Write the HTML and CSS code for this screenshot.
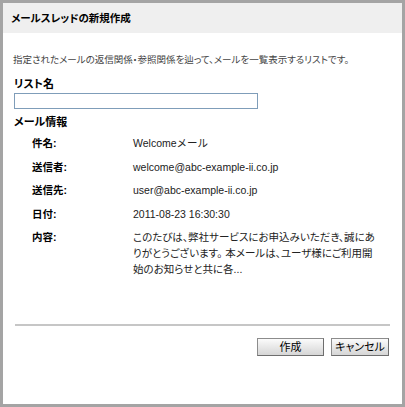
FILE: index.html
```html
<!DOCTYPE html>
<html lang="ja">
<head>
<meta charset="utf-8">
<title>メールスレッドの新規作成</title>
<link rel="stylesheet" href="styles.css">
</head>
<body>
<div class="dialog">
  <div class="header">メールスレッドの新規作成</div>
  <div class="content">
    <p class="desc">指定されたメールの返信関係・参照関係を辿って、メールを一覧表示するリストです。</p>
    <div class="field-label">リスト名</div>
    <input class="text-input" type="text">
    <div class="section-label">メール情報</div>
    <div class="info">
      <div class="k">件名:</div><div class="v">Welcomeメール</div>
      <div class="k">送信者:</div><div class="v">welcome@abc-example-ii.co.jp</div>
      <div class="k">送信先:</div><div class="v">user@abc-example-ii.co.jp</div>
      <div class="k">日付:</div><div class="v">2011-08-23 16:30:30</div>
      <div class="k">内容:</div><div class="v body-text">このたびは、弊社サービスにお申込みいただき、誠にありがとうございます。&nbsp;本メールは、ユーザ様にご利用開始のお知らせと共に各...</div>
    </div>
    <div class="footer">
      <hr class="rule">
      <div class="buttons">
        <button class="btn btn-create" type="button">作成</button>
        <button class="btn btn-cancel" type="button">キャンセル</button>
      </div>
    </div>
  </div>
</div>
</body>
</html>
```
FILE: styles.css
```css
html, body {
  margin: 0;
  padding: 0;
  background: #ffffff;
}
body {
  font-family: "Liberation Sans", "Noto Sans CJK JP", sans-serif;
  color: #000;
}
.dialog {
  width: 405px;
  height: 407px;
  box-sizing: border-box;
  border: 3px solid #a4a4a4;
  display: flex;
  flex-direction: column;
  background: #fff;
}
.header {
  height: 30px;
  flex: none;
  background: #efefef;
  padding-left: 8px;
  font-size: 10.5px;
  font-weight: bold;
  line-height: 30px;
  font-feature-settings: "palt";
}
.content {
  flex: 1;
  display: flex;
  flex-direction: column;
  padding: 0 12px 0 11px;
}
.desc {
  margin: 20px 0 0 -1px;
  font-size: 9.5px;
  line-height: 14px;
  color: #444;
  font-feature-settings: "palt";
  white-space: nowrap;
}
.field-label, .section-label {
  font-size: 11px;
  font-weight: bold;
  line-height: 14px;
  font-feature-settings: "palt";
}
.field-label {
  margin-top: 10px;
}
.text-input {
  margin: 2px 0 0;
  width: 244px;
  height: 16px;
  box-sizing: border-box;
  border: 1px solid #7f9db9;
  padding: 0 2px;
  font: inherit;
  font-size: 11px;
  outline: none;
}
.section-label {
  margin-top: 6px;
}
.info {
  display: grid;
  grid-template-columns: 101px 245px;
  row-gap: 9.5px;
  margin: 7px 0 0 18px;
  font-size: 10.5px;
  line-height: 14px;
}
.k {
  font-weight: bold;
  font-feature-settings: "palt";
}
.v {
  color: #222;
}
.body-text {
  line-height: 16px;
  margin-top: -1px;
  font-feature-settings: "palt";
}
.footer {
  margin-top: auto;
  margin-bottom: 48px;
}
.rule {
  margin: 0 0 12px 1px;
  border: none;
  border-top: 2px solid #c6c6c6;
  height: 0;
}
.buttons {
  display: flex;
  justify-content: flex-end;
  gap: 7px;
  margin-right: 1px;
}
.btn {
  height: 18px;
  box-sizing: border-box;
  padding: 0;
  border: 1px solid #8c8c8c;
  border-right-color: #6e6e6e;
  border-bottom-color: #6e6e6e;
  background: linear-gradient(#fbfbfb, #e4e4e4 60%, #d6d6d6);
  font-family: "Liberation Sans", "Noto Sans CJK JP", sans-serif;
  font-size: 11px;
  line-height: 16px;
  color: #000;
  font-feature-settings: "palt";
}
.btn-create {
  width: 67px;
}
.btn-cancel {
  width: 58px;
}
```
